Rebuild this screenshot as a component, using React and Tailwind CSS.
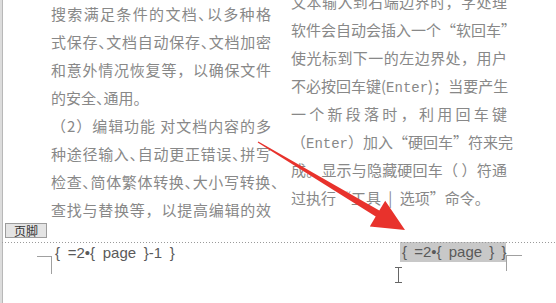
import React from "react";

const cjk = "font-['Noto_Sans_CJK_SC','Noto_Sans',sans-serif]";
const lineJ =
  "h-[28px] leading-[28px] whitespace-nowrap text-justify [text-align-last:justify]";
const lineL = "h-[28px] leading-[28px] whitespace-nowrap";

function En({ children }) {
  return <span className="font-['Liberation_Mono',monospace] text-[14px]">{children}</span>;
}

function T({ s }) {
  const parts = s.split("、");
  return parts.map((p, i) => (
    <React.Fragment key={i}>
      {p}
      {i < parts.length - 1 ? (
        <span className="[font-feature-settings:'halt']">、</span>
      ) : null}
    </React.Fragment>
  ));
}

export default function App() {
  const left = [
    "搜索满足条件的文档、以多种格",
    "式保存、文档自动保存、文档加密",
    "和意外情况恢复等，以确保文件",
  ];
  const left2 = [
    "（2）编辑功能 对文档内容的多",
    "种途径输入、自动更正错误、拼写",
    "检查、简体繁体转换、大小写转换",
    "查找与替换等，以提高编辑的效",
  ];
  return (
    <div className={`relative w-[556px] h-[303px] overflow-hidden bg-white flex ${cjk}`}>
      <div className="w-[3px] shrink-0 bg-[#dcdcdc] border-r border-[#b8b8b8]" />
      <div className="flex-1 flex flex-col">
        {/* body text */}
        <div className="h-[223px] overflow-hidden flex text-[15px] text-[#888888]">
          <div className="ml-[48px] w-[220px] shrink-0">
            {left.map((t) => (
              <div key={t} className={lineJ}><T s={t} /></div>
            ))}
            <div className={lineL}><T s="的安全、通用。" /></div>
            {left2.map((t, i) => (
              <div key={t} className={lineJ}>
                <T s={t} />
                {i === 2 ? (
                  <span className="inline-block w-0 [font-feature-settings:'halt']">、</span>
                ) : null}
              </div>
            ))}
          </div>
          <div className="ml-[20px] w-[216px] shrink-0 -mt-[12px]">
            <div className={lineJ}>文本输入到右端边界时，字处理</div>
            <div className={lineJ}>软件会自动会插入一个“软回车”</div>
            <div className={lineJ}>使光标到下一的左边界处，用户</div>
            <div className={lineJ}>
              不必按回车键(<En>Enter</En>)；当要产生
            </div>
            <div className={lineJ}>一个新段落时，利用回车键</div>
            <div className={lineJ}>
              （<En>Enter</En>）加入“硬回车”符来完
            </div>
            <div className={lineJ}>成。显示与隐藏硬回车（ ）符通</div>
            <div className={`${lineL} [word-spacing:4px]`}>过执行“工具 | 选项”命令。</div>
          </div>
        </div>

        {/* footer tab */}
        <div className="h-[20px] flex items-start">
          <div className="ml-[2px] w-[42px] h-[15px] bg-[#e4e4e4] border border-[#9c9c9c] flex items-center justify-center text-[12px] leading-none text-[#333]">
            页脚
          </div>
        </div>

        {/* fields row */}
        <div className="relative flex items-start h-[60px] font-['Liberation_Sans',Arial,sans-serif] text-[15px] text-[#5a5a5a]">
          <div className="absolute -top-px left-[-4px] right-0 h-px bg-[repeating-linear-gradient(90deg,#9a9a9a_0_1px,transparent_1px_3px)]" />
          <div className="w-[397px] shrink-0 flex items-start">
            <div className="ml-[34px] mt-[13px] w-[15px] h-[18px] border-t border-r border-[#a0a0a0]" />
            <div className="ml-[3px] leading-[19px] whitespace-pre [word-spacing:3.5px]">
              {"{ =2•{ page }-1 }"}
            </div>
          </div>
          <div className="-mt-px h-[20px] w-[106px] bg-[#c8c8c8] leading-[20px] pl-[2px] whitespace-pre [word-spacing:3px] flex items-center">
            <span>{"{ =2•{ page"}</span>
            <span className="inline-block w-px h-[15px] bg-[#333]" />
            <span>{" } }"}</span>
          </div>
          <div className="mt-[12px] w-[16px] h-[16px] border-t border-l border-[#a0a0a0]" />
        </div>
      </div>

      {/* mouse I-beam cursor */}
      <div className="absolute left-[395px] top-[267px] w-[7px] h-[16px] flex flex-col items-center">
        <div className="w-[7px] h-px bg-[#666]" />
        <div className="w-px flex-1 bg-[#666]" />
        <div className="w-[7px] h-px bg-[#666]" />
      </div>

      {/* red annotation arrow */}
      <svg className="absolute inset-0" width="556" height="303" viewBox="0 0 556 303">
        <polygon
          points="258.3,141.6 379.3,210.6 385.2,200.7 405,230 369.8,226.5 375.7,216.6 257.7,142.4"
          fill="#e8322c"
        />
      </svg>
    </div>
  );
}
